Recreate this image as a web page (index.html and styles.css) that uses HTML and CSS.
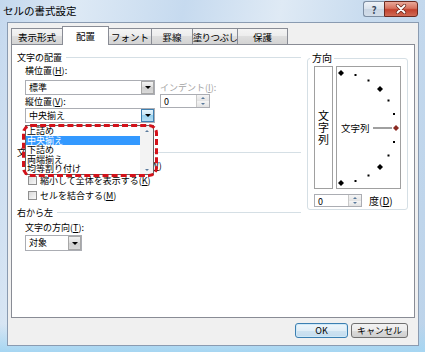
FILE: index.html
```html
<!DOCTYPE html>
<html>
<head>
  <meta charset="utf-8">
  <title>セルの書式設定</title>
  <link rel="stylesheet" href="styles.css">
</head>
<body>
  <div class="window">
    <div class="titlebar">
      <span class="title">セルの書式設定</span>
      <div class="caption">
        <span class="cbtn help">?</span>
        <span class="cbtn close">
          <svg width="12" height="10" viewBox="0 0 12 10">
            <path d="M2.5 1.5 L9.5 8.5 M9.5 1.5 L2.5 8.5" stroke="#6b2a1e" stroke-width="3.2" stroke-linecap="round"/>
            <path d="M2.5 1.5 L9.5 8.5 M9.5 1.5 L2.5 8.5" stroke="#fff" stroke-width="1.8" stroke-linecap="round"/>
          </svg>
        </span>
      </div>
    </div>

    <div class="client">
      <div class="tabs">
        <span class="tab t-format">表示形式</span>
        <span class="tab t-align active">配置</span>
        <span class="tab t-font">フォント</span>
        <span class="tab t-border">罫線</span>
        <span class="tab t-fill">塗りつぶし</span>
        <span class="tab t-protect">保護</span>
      </div>

      <div class="panel">
        <div class="left">
          <div class="ghead">文字の配置</div>
          <div class="gbody">
            <div class="lbl mt3">横位置(<u>H</u>):</div>
            <div class="align-grid">
              <div class="select"><span class="val">標準</span><i class="arrow"></i></div>
              <div class="lbl dim">インデント(<u>I</u>):</div>
              <div class="lbl">縦位置(<u>V</u>):</div>
              <div class="spin"><span class="val">0</span><i class="spin-btns"><b class="up"></b><b class="down"></b></i></div>
              <div class="select"><span class="val">中央揃え</span><i class="arrow pressed"></i></div>
            </div>
          </div>

          <div class="ghead mt24">文字の制御</div>
          <div class="gbody">
            <div class="check"><i class="box"></i>折り返して全体を表示する(<u>W</u>)</div>
            <div class="check"><i class="box"></i>縮小して全体を表示する(<u>K</u>)</div>
            <div class="check"><i class="box"></i>セルを結合する(<u>M</u>)</div>
          </div>

          <div class="ghead mt4">右から左</div>
          <div class="gbody">
            <div class="lbl mt5">文字の方向(<u>T</u>):</div>
            <div class="select short"><span class="val">対象</span><i class="arrow"></i></div>
          </div>

          <!-- open dropdown of 縦位置 -->
          <div class="droplist">
            <ul class="items">
              <li>上詰め</li>
              <li class="sel">中央揃え</li>
              <li>下詰め</li>
              <li>両端揃え</li>
              <li>均等割り付け</li>
            </ul>
            <div class="vscroll"><b class="up"></b><b class="down"></b></div>
          </div>
          <div class="callout"></div>
        </div>

        <fieldset class="orient">
          <legend>方向</legend>
          <div class="orient-row">
            <div class="vtext">文字列</div>
            <svg class="dial" width="65" height="123" viewBox="0 0 65 123">
              <rect x="0.5" y="0.5" width="64" height="122" fill="#fff" stroke="#a0a0a0"/>
              <polygon points="5,4 8,7 5,10 2,7" fill="#000"/>
              <rect x="18.5" y="8" width="2" height="2" fill="#000"/>
              <rect x="31.5" y="13.5" width="2" height="2" fill="#000"/>
              <polygon points="44,20 47,23 44,26 41,23" fill="#000"/>
              <rect x="51.5" y="33.5" width="2" height="2" fill="#000"/>
              <rect x="57" y="47" width="2" height="2" fill="#000"/>
              <line x1="37" y1="62" x2="56" y2="62" stroke="#808080" stroke-width="1.5"/>
              <polygon points="60,59 63,62 60,65 57,62" fill="#8b2a22"/>
              <rect x="57" y="75" width="2" height="2" fill="#000"/>
              <rect x="51.5" y="88.5" width="2" height="2" fill="#000"/>
              <polygon points="44,98 47,101 44,104 41,101" fill="#000"/>
              <rect x="31.5" y="108.5" width="2" height="2" fill="#000"/>
              <rect x="18.5" y="114" width="2" height="2" fill="#000"/>
              <polygon points="5,114 8,117 5,120 2,117" fill="#000"/>
              <text x="5" y="65.5" class="dial-text">文字列</text>
            </svg>
          </div>
          <div class="deg-row">
            <div class="spin deg"><span class="val">0</span><i class="spin-btns"><b class="up"></b><b class="down"></b></i></div>
            <span class="deg-lbl">度(<u>D</u>)</span>
          </div>
        </fieldset>
      </div>

      <div class="buttons">
        <button class="btn ok">OK</button>
        <button class="btn cancel">キャンセル</button>
      </div>
    </div>
  </div>
</body>
</html>
```

FILE: styles.css
```css
/* dialog: セルの書式設定 */
body {
  margin: 0;
  font-family: "Noto Sans CJK JP", "Noto Sans", sans-serif;
  font-size: 9px;
  color: #000;
}
u {
  text-decoration: underline;
}

.window {
  width: 425px;
  height: 352px;
  display: flex;
  flex-direction: column;
  background:
    linear-gradient(to bottom, rgba(168, 214, 241, 0) 92%, #a6d6f2 100%),
    linear-gradient(100deg, #c4d8ee 0%, #dde9f5 16%, #c6daef 38%, #dfeaf5 58%, #c9dcef 75%, #bcd3ea 100%);
}

/* title bar */
.titlebar {
  height: 22px;
  display: flex;
  align-items: flex-start;
  padding: 0 7px 0 3px;
}
.title {
  line-height: 22px;
  font-size: 10.5px;
}
.caption {
  margin-left: auto;
  margin-top: 1px;
  display: flex;
}
.cbtn {
  height: 16px;
  box-sizing: border-box;
  display: flex;
  align-items: center;
  justify-content: center;
}
.help {
  width: 21px;
  border: 1px solid #7d8ea3;
  border-right: 0;
  border-radius: 3px 0 0 3px;
  background: linear-gradient(#eef2f7, #d9e2ec 50%, #c9d5e3 50%, #d3dde9);
  color: #3b4b5e;
  font-weight: bold;
  font-size: 10px;
}
.close {
  width: 34px;
  border: 1px solid #6b2a20;
  border-radius: 0 3px 3px 0;
  background: linear-gradient(#e9a899, #d6725f 45%, #c2412d 55%, #d06a55);
}

/* client area */
.client {
  flex: 1;
  margin: 0 6px 6px 7px;
  padding: 0 3px;
  background: #f0f0f0;
  border: 1px solid #8a9bb1;
  display: flex;
  flex-direction: column;
}

.tabs {
  display: flex;
  align-items: flex-end;
  height: 22px;
  margin-bottom: -1px;
}
.tab {
  height: 16px;
  box-sizing: border-box;
  margin: 0 0 1px -1px;
  border: 1px solid #898c95;
  border-bottom: 0;
  background: linear-gradient(#f4f4f4, #ececec 50%, #dedede 50%, #d3d3d3);
  display: flex;
  align-items: center;
  justify-content: center;
  white-space: nowrap;
  font-size: 9.5px;
}
.tab:first-child {
  margin-left: 0;
}
.tab.active {
  height: 19px;
  margin-bottom: 0;
  background: #fff;
  z-index: 1;
}
.t-format { width: 52px; }
.t-align { width: 47px; }
.t-font { width: 44px; }
.t-border { width: 42px; }
.t-fill { width: 46px; letter-spacing: -0.6px; }
.t-protect { width: 51px; }

.panel {
  height: 274px;
  box-sizing: border-box;
  border: 1px solid #898c95;
  background: #fff;
  display: flex;
  gap: 6px;
  padding-right: 6px;
}

/* left column */
.left {
  width: 289px;
  box-sizing: border-box;
  padding: 7px 0 0 5px;
  position: relative;
}
.ghead {
  display: flex;
  align-items: center;
  gap: 4px;
  height: 11px;
  line-height: 11px;
}
.ghead::after {
  content: "";
  flex: 1;
  border-top: 1px solid #d5dfe5;
}
.gbody {
  padding-left: 8px;
}
.lbl {
  height: 10px;
  line-height: 10px;
  white-space: nowrap;
}
.dim {
  color: #a3a3a3;
  align-self: center;
}
.mt3 { margin-top: 3px; }
.mt4 { margin-top: 4px; }
.mt5 { margin-top: 5px; }
.mt24 { margin-top: 24px; }

.align-grid {
  margin-top: 4px;
  display: grid;
  grid-template-columns: 130px 50px;
  grid-template-rows: 15px 13px 15px;
  column-gap: 5px;
  align-items: center;
}

.select {
  display: flex;
  height: 15px;
  box-sizing: border-box;
  border: 1px solid #abadb3;
  background: #fff;
}
.select.short {
  width: 57px;
  height: 16px;
  margin-top: 2px;
}
.val {
  flex: 1;
  padding-left: 3px;
  line-height: 13px;
  white-space: nowrap;
}
.arrow {
  width: 13px;
  box-sizing: border-box;
  border: 1px solid #a7a7a7;
  background: linear-gradient(#f3f3f3, #dcdcdc 50%, #cfcfcf 50%, #d9d9d9);
  display: flex;
  align-items: center;
  justify-content: center;
}
.arrow::before {
  content: "";
  border-left: 3px solid transparent;
  border-right: 3px solid transparent;
  border-top: 3px solid #000;
}
.arrow.pressed {
  border-color: #3c7fb1;
  background: linear-gradient(#e5f4fc, #c4e5f6 50%, #98d1ef 50%, #b6def3);
}

.spin {
  display: flex;
  height: 14px;
  margin-top: -1px;
  box-sizing: border-box;
  border: 1px solid #abadb3;
  background: #fff;
}
.spin-btns {
  width: 12px;
  display: flex;
  flex-direction: column;
  border-left: 1px solid #c9c9c9;
}
.spin-btns b,
.vscroll b {
  flex: 1;
  display: flex;
  align-items: center;
  justify-content: center;
  background: linear-gradient(#f5f5f5, #e2e2e2);
}
.spin-btns .up::before,
.vscroll .up::before {
  content: "";
  border-left: 2px solid transparent;
  border-right: 2px solid transparent;
  border-bottom: 2px solid #5a7a9c;
}
.spin-btns .down::before,
.vscroll .down::before {
  content: "";
  border-left: 2px solid transparent;
  border-right: 2px solid transparent;
  border-top: 2px solid #5a7a9c;
}

.check {
  display: flex;
  align-items: center;
  height: 15px;
  white-space: nowrap;
}
.box {
  width: 9px;
  height: 9px;
  box-sizing: border-box;
  margin: 0 3px;
  border: 1px solid #8f8f8f;
  background: linear-gradient(135deg, #d9d9d9, #f8f8f8);
}

/* open dropdown over the form */
.droplist {
  position: absolute;
  left: 13px;
  top: 80px;
  width: 129px;
  height: 50px;
  box-sizing: border-box;
  border: 1px solid #646464;
  background: #fff;
  display: flex;
}
.items {
  flex: 1;
  list-style: none;
  margin: 0;
  padding: 0;
}
.items li {
  height: 9.5px;
  line-height: 9.5px;
  padding-left: 1px;
  white-space: nowrap;
}
.items li.sel {
  background: #3399ff;
  color: #fff;
}
.vscroll {
  width: 13px;
  display: flex;
  flex-direction: column;
  justify-content: space-between;
  background: #f3f3f3;
}
.vscroll b {
  flex: 0 0 9px;
  background: none;
}
.callout {
  position: absolute;
  left: 10px;
  top: 79px;
  width: 136px;
  height: 53px;
  box-sizing: border-box;
  border: 3px dashed #d3121a;
  border-radius: 9px;
}

/* 方向 */
.orient {
  width: 101px;
  min-width: 0;
  box-sizing: border-box;
  margin: 7px 0 0;
  padding: 2px 6px 1px;
  border: 1px solid #d5dfe5;
  border-radius: 3px;
  align-self: flex-start;
}
.orient legend {
  padding: 0 2px;
  margin-left: -4px;
  line-height: 12px;
  font-size: 10px;
}
.orient-row {
  display: flex;
  gap: 3px;
  height: 123px;
}
.vtext {
  width: 19px;
  box-sizing: border-box;
  border: 1px solid #a0a0a0;
  background: #fff;
  display: flex;
  align-items: center;
  justify-content: center;
  writing-mode: vertical-rl;
  font-size: 11px;
  letter-spacing: 1px;
}
.dial-text {
  font-family: "Noto Sans CJK JP", sans-serif;
  font-size: 9.5px;
}
.deg-row {
  display: flex;
  align-items: center;
  margin-top: 4px;
}
.spin.deg {
  width: 48px;
  height: 13px;
  margin-top: 0;
}
.deg-lbl {
  margin-left: 7px;
  font-size: 10px;
}

/* OK / キャンセル */
.buttons {
  display: flex;
  justify-content: flex-end;
  gap: 3px;
  margin-top: 5px;
  padding-right: 7px;
}
.btn {
  height: 15px;
  padding: 0;
  font: inherit;
  line-height: 13px;
  color: #000;
  border: 1px solid #707070;
  border-radius: 3px;
  background: linear-gradient(#f2f2f2, #ebebeb 50%, #dddddd 50%, #cfcfcf);
}
.ok {
  width: 53px;
  border-color: #3c7fb1;
  box-shadow: inset 0 0 0 1px #cfe9f8;
  background: linear-gradient(#eef6fb, #e1eef7 50%, #cfe3f1 50%, #c4dcee);
}
.cancel {
  width: 57px;
}
```
